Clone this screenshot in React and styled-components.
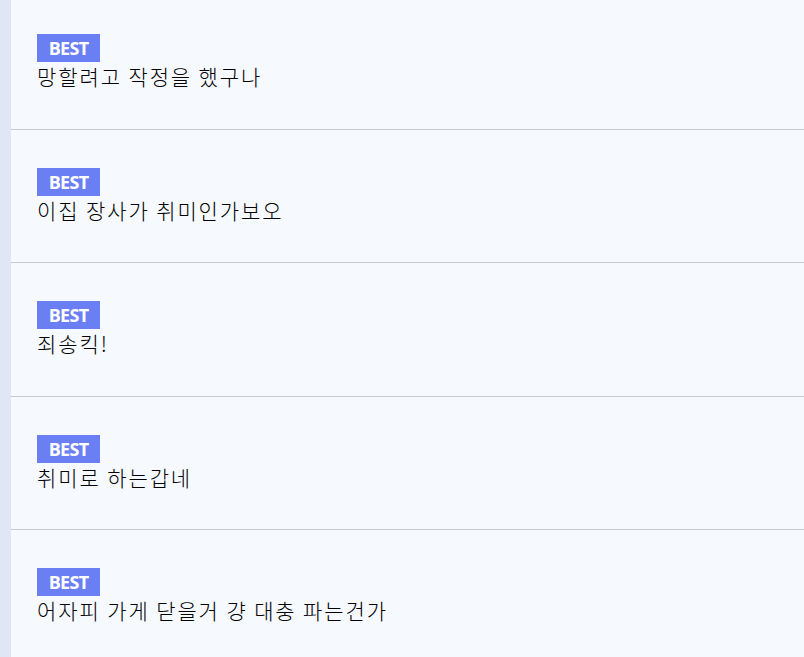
import React from "react";
import styled, { createGlobalStyle } from "styled-components";

const GlobalStyle = createGlobalStyle`
	html, body {
		margin: 0;
		padding: 0;
		background: #f6f9fe;
		overflow: hidden;
	}
`;

const Page = styled.div`
	display: flex;
	height: 657px;
	background: #f6f9fe;
	font-family: "Noto Sans CJK KR", "Noto Sans", sans-serif;
`;

const Strip = styled.div`
	width: 11px;
	flex-shrink: 0;
	background: #e1e6f6;
`;

const List = styled.ul`
	flex: 1;
	margin: 0;
	padding: 0;
	list-style: none;
`;

const Row = styled.li`
	display: flex;
	flex-direction: column;
	align-items: flex-start;
	padding: 38px 26px 37px;
	border-bottom: 1px solid #c7c9ce;

	&:first-child {
		padding-top: 34px;
	}
`;

const Badge = styled.span`
	display: inline-block;
	box-sizing: border-box;
	width: 63px;
	height: 28px;
	background: #6b7ff4;
	color: #fff;
	text-align: center;
	font-family: "Open Sans", "Liberation Sans", sans-serif;
	font-weight: 700;
	font-size: 18px;
	line-height: 28px;
	letter-spacing: -0.7px;
`;

const Comment = styled.p`
	margin: 0;
	font-size: 21px;
	font-weight: 300;
	line-height: 29.5px;
	letter-spacing: 1.9px;
	color: #000;
`;

const comments = [
	"망할려고 작정을 했구나",
	"이집 장사가 취미인가보오",
	"죄송킥!",
	"취미로 하는갑네",
	"어자피 가게 닫을거 걍 대충 파는건가",
];

const App = () => (
	<>
		<GlobalStyle />
		<Page>
			<Strip />
			<List>
				{comments.map((text) => (
					<Row key={text}>
						<Badge>BEST</Badge>
						<Comment>{text}</Comment>
					</Row>
				))}
			</List>
		</Page>
	</>
);

export default App;
